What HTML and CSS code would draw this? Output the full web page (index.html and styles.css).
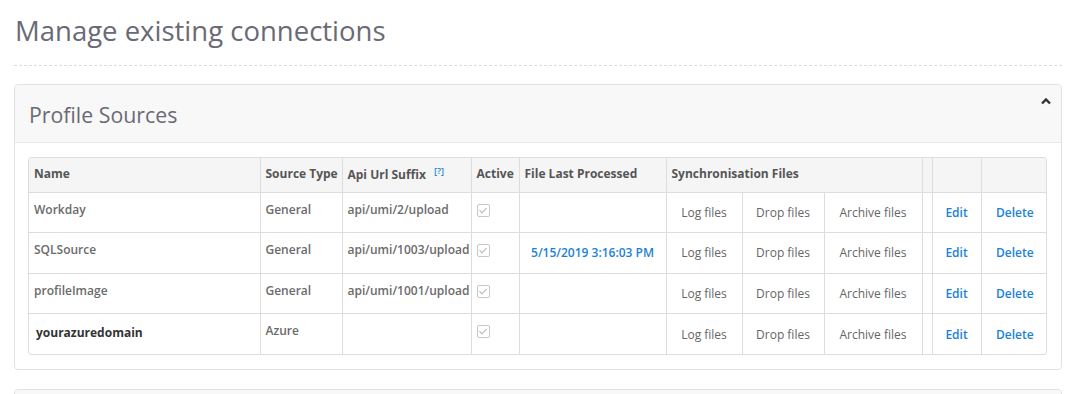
FILE: index.html
```html
<!DOCTYPE html>
<html lang="en">
<head>
    <meta charset="UTF-8">
    <title>Manage existing connections</title>
    <link rel="stylesheet" href="styles.css">
</head>
<body>

    <!-- Page title -->
    <h1 class="page-title">Manage existing connections</h1>

    <!-- Profile sources panel -->
    <div class="panel">
        <div class="panel-heading">
            <h2>Profile Sources</h2>
            <svg class="chevron" width="10" height="8" viewBox="0 0 10 8">
                <path d="M1 6.5 L5 2.5 L9 6.5" fill="none" stroke="#333" stroke-width="2.4"/>
            </svg>
        </div>
        <div class="panel-body">
            <div class="table-wrap">
                <table class="sources">
                    <colgroup>
                        <col style="width:231px">
                        <col style="width:82px">
                        <col style="width:129px">
                        <col style="width:48px">
                        <col style="width:147px">
                        <col style="width:76px">
                        <col style="width:82px">
                        <col style="width:98px">
                        <col style="width:10px">
                        <col style="width:49px">
                        <col style="width:67px">
                    </colgroup>
                    <thead>
                        <tr>
                            <th>Name</th>
                            <th>Source Type</th>
                            <th>Api Url Suffix <sup class="help">[?]</sup></th>
                            <th>Active</th>
                            <th>File Last Processed</th>
                            <th colspan="3">Synchronisation Files</th>
                            <th></th>
                            <th></th>
                            <th></th>
                        </tr>
                    </thead>
                    <tbody>
                        <tr>
                            <td>Workday</td>
                            <td>General</td>
                            <td>api/umi/2/upload</td>
                            <td><span class="check"></span></td>
                            <td class="mid"></td>
                            <td class="mid center">Log files</td>
                            <td class="mid center">Drop files</td>
                            <td class="mid center">Archive files</td>
                            <td></td>
                            <td class="mid center"><a href="#">Edit</a></td>
                            <td class="mid center"><a href="#">Delete</a></td>
                        </tr>
                        <tr>
                            <td>SQLSource</td>
                            <td>General</td>
                            <td>api/umi/1003/upload</td>
                            <td><span class="check"></span></td>
                            <td class="mid center"><a href="#">5/15/2019 3:16:03 PM</a></td>
                            <td class="mid center">Log files</td>
                            <td class="mid center">Drop files</td>
                            <td class="mid center">Archive files</td>
                            <td></td>
                            <td class="mid center"><a href="#">Edit</a></td>
                            <td class="mid center"><a href="#">Delete</a></td>
                        </tr>
                        <tr>
                            <td>profileImage</td>
                            <td>General</td>
                            <td>api/umi/1001/upload</td>
                            <td><span class="check"></span></td>
                            <td class="mid"></td>
                            <td class="mid center">Log files</td>
                            <td class="mid center">Drop files</td>
                            <td class="mid center">Archive files</td>
                            <td></td>
                            <td class="mid center"><a href="#">Edit</a></td>
                            <td class="mid center"><a href="#">Delete</a></td>
                        </tr>
                        <tr>
                            <td class="strong">yourazuredomain</td>
                            <td>Azure</td>
                            <td></td>
                            <td><span class="check"></span></td>
                            <td class="mid"></td>
                            <td class="mid center">Log files</td>
                            <td class="mid center">Drop files</td>
                            <td class="mid center">Archive files</td>
                            <td></td>
                            <td class="mid center"><a href="#">Edit</a></td>
                            <td class="mid center"><a href="#">Delete</a></td>
                        </tr>
                    </tbody>
                </table>
            </div>
        </div>
    </div>

    <!-- Next panel (cut off) -->
    <div class="panel panel-next">
        <div class="panel-heading"></div>
    </div>

</body>
</html>
```

FILE: styles.css
```css
/* General */
body {
    font-family: 'Open Sans', 'Liberation Sans', sans-serif;
    margin: 0;
    padding: 0 8px 0 14px;
    background: #fff;
    color: #666;
}

/* Title */
.page-title {
    margin: 0;
    padding: 15px 0 18px 1px;
    font-size: 27.5px;
    line-height: 32px;
    font-weight: 400;
    color: #6a6a76;
    border-bottom: 1px dashed #ddd;
}

/* Panel */
.panel {
    margin-top: 18px;
    border: 1px solid #e2e2e2;
    border-radius: 4px;
    background: #fff;
}

.panel-heading {
    display: flex;
    align-items: center;
    justify-content: space-between;
    height: 57px;
    padding: 0 10px 0 14px;
    background: #f8f8f8;
    border-bottom: 1px solid #e6e6e6;
    border-radius: 4px 4px 0 0;
}

.panel-heading h2 {
    margin: 0;
    font-size: 21.3px;
    font-weight: 400;
    color: #6a6a76;
    padding-top: 1px;
}

.chevron {
    align-self: flex-start;
    margin-top: 12px;
}

.panel-body {
    padding: 14px 14px 14px 13px;
}

.panel-next {
    margin-top: 19px;
    height: 40px;
}

/* Table */
.table-wrap {
    border: 1px solid #ddd;
    border-radius: 3px;
    overflow: hidden;
}

.sources {
    width: 100%;
    table-layout: fixed;
    border-collapse: collapse;
    font-size: 12px;
}

.sources th,
.sources td {
    border-left: 1px solid #ddd;
    border-top: 1px solid #ddd;
    padding: 0 5px;
    text-align: left;
    white-space: nowrap;
    overflow: hidden;
}

.sources th:first-child,
.sources td:first-child {
    border-left: none;
}

.sources thead tr {
    height: 34px;
}

.sources thead th {
    border-top: none;
    background: #f5f5f5;
    font-weight: 700;
    color: #555;
    vertical-align: middle;
    padding-bottom: 2px;
}

.sources tbody tr {
    height: 40.5px;
}

.sources td {
    vertical-align: top;
    padding-top: 8px;
    font-weight: 600;
    color: #6b6b6b;
}

.sources td.mid {
    vertical-align: middle;
    padding-top: 0;
    font-weight: 400;
    color: #666;
}

.sources td.center {
    text-align: center;
}

.sources td.strong {
    font-weight: 700;
    color: #333;
    padding-top: 10px;
    padding-left: 7px;
}

.sources a {
    color: #1a82d6;
    text-decoration: none;
    font-weight: 600;
}

.help {
    font-size: 9px;
    color: #1a82d6;
    font-weight: 600;
    margin-left: 5px;
}

/* Disabled checkbox */
.check {
    display: inline-block;
    width: 11px;
    height: 11px;
    margin-top: 3px;
    border: 1px solid #c8c8c8;
    border-radius: 2px;
    position: relative;
    background: #fff;
}

.check::after {
    content: "";
    position: absolute;
    left: 3px;
    top: 1px;
    width: 3px;
    height: 6px;
    border: solid #b8b8b8;
    border-width: 0 1px 1px 0;
    transform: rotate(45deg);
}
```
